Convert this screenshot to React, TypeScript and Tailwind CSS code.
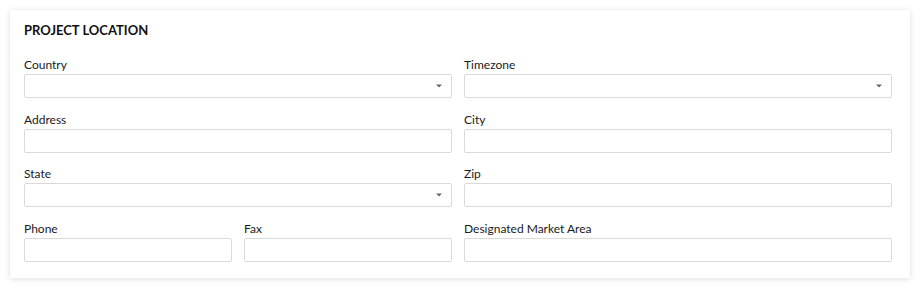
function Caret() {
  return (
    <span className="absolute right-[9px] top-1/2 -translate-y-1/2 w-0 h-0 border-l-[3px] border-r-[3px] border-t-[3px] border-l-transparent border-r-transparent border-t-[#666]" />
  )
}

interface FieldProps {
  label: string
  select?: boolean
}

function Field({ label, select }: FieldProps) {
  return (
    <div className="flex flex-col">
      <label className="text-[12px] leading-4 text-[#1a1a1a] mb-px">{label}</label>
      <div className="relative h-6 rounded-[2px] border border-[#dadada] bg-white">
        {select && <Caret />}
      </div>
    </div>
  )
}

export default function App() {
  return (
    <div className="w-[920px] h-[288px] bg-white p-[10px] font-['Lato','Liberation_Sans',sans-serif]">
      <div className="w-[900px] h-[268px] bg-white shadow-[0_1px_6px_rgba(0,0,0,0.14)] pl-[14px] pr-[18px] pt-[12px]">
        <h2 className="text-[13px] leading-4 font-bold text-[#111] mb-[19px]">PROJECT LOCATION</h2>

        <div className="grid grid-cols-2 gap-x-3 gap-y-[13.5px]">
          <Field label="Country" select />
          <Field label="Timezone" select />
          <Field label="Address" />
          <Field label="City" />
          <Field label="State" select />
          <Field label="Zip" />
          <div className="grid grid-cols-2 gap-x-3">
            <Field label="Phone" />
            <Field label="Fax" />
          </div>
          <Field label="Designated Market Area" />
        </div>
      </div>
    </div>
  )
}
